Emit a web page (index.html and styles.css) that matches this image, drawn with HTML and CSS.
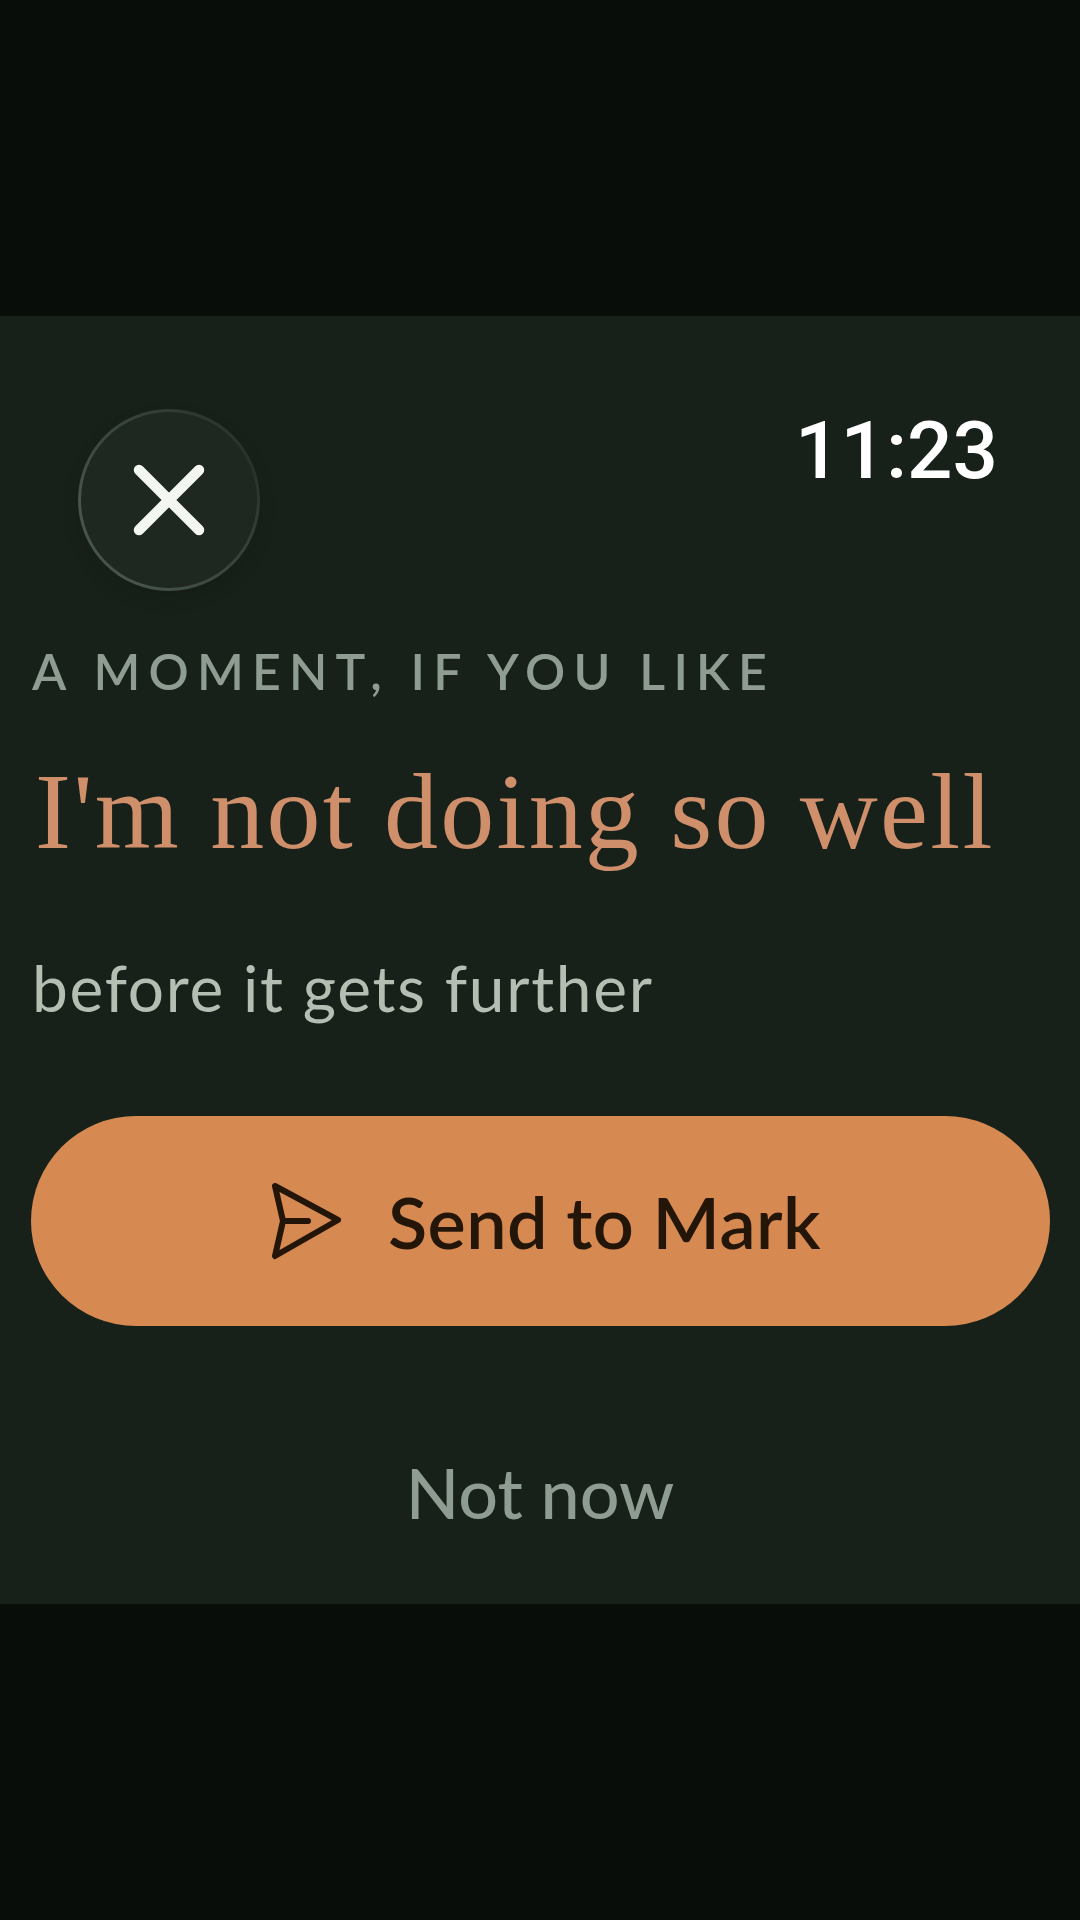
FILE: index.html
```html
<!DOCTYPE html>
<html lang="en">
<head>
<meta charset="utf-8">
<title>A moment</title>
<link rel="stylesheet" href="styles.css">
</head>
<body>
<main class="panel">
  <header class="top">
    <button class="close" aria-label="Close">
      <svg class="close-icon" viewBox="0 0 72 72" aria-hidden="true"><path d="M6 6 66 66M66 6 6 66"/></svg>
    </button>
    <time class="clock">11:23</time>
  </header>
  <p class="eyebrow">A MOMENT, IF YOU LIKE</p>
  <h1 class="title">I'm not doing so well</h1>
  <p class="sub">before it gets further</p>
  <button class="send">
    <svg class="send-icon" viewBox="0 0 72 80" aria-hidden="true"><path d="M5 5 68 39 5 75 13 40ZM13 40H38"/></svg>
    <span>Send to Mark</span>
  </button>
  <button class="later">Not now</button>
</main>
</body>
</html>
```
FILE: styles.css
```css
* { box-sizing: border-box; }
html, body { margin: 0; height: 1920px; }
body { background: #090d09; padding-top: 316px; overflow: hidden; }
.panel {
  height: 1288px;
  background: #18201a;
  padding: 93px 30px 0;
  display: flex;
  flex-direction: column;
  font-family: Lato, "Noto Sans", sans-serif;
}
.top { display: flex; justify-content: space-between; align-items: flex-start; padding: 0 52px 0 48px; }
.close {
  width: 182px; height: 182px;
  border-radius: 50%;
  border: 3px solid transparent;
  background:
    linear-gradient(#1e2820, #1e2820) padding-box,
    conic-gradient(from 0deg, #303c33, #27322a 70deg, #37443a 130deg, #465449 200deg, #465449 270deg, #303c33) border-box;
  box-shadow: 0 8px 18px rgba(0,0,0,.1);
  padding: 0;
  display: flex; align-items: center; justify-content: center;
}
.close-icon { width: 72px; height: 72px; }
.close-icon path { fill: none; stroke: #f4f6f2; stroke-width: 10.5; stroke-linecap: round; }
.clock { font-family: Roboto, sans-serif; font-weight: 500; font-size: 80px; line-height: 1; color: #fff; margin-top: 2px; }
.eyebrow { margin: 50px 0 0 2px; font-size: 50px; line-height: 60px; letter-spacing: 8.2px; color: #8f9c91; font-weight: 600; }
.title { margin: 46px 0 0 5px; font-family: "Liberation Serif", serif; font-weight: 400; font-size: 108px; line-height: 130px; letter-spacing: 2.2px; color: #cf8f6b; white-space: nowrap; }
.sub { margin: 73px 0 0 2px; font-size: 64px; line-height: 76px; letter-spacing: 1.7px; color: #b5beb3; }
.send {
  margin: 90px 0 0 1px;
  width: 1019px; height: 210px;
  border: 0; border-radius: 105px;
  background: #d68a52;
  color: #241509;
  display: flex; align-items: center; justify-content: center; gap: 46px;
  padding: 0 0 0 10px;
  font: 600 72px Lato, "Noto Sans", sans-serif;
  letter-spacing: .4px;
}
.send-icon { width: 72px; height: 80px; flex: none; }
.send-icon path { fill: none; stroke: #241509; stroke-width: 6; stroke-linecap: round; stroke-linejoin: round; }
.later {
  margin: 124px 0 0;
  align-self: center;
  background: none; border: 0; padding: 0;
  font: 500 70px Lato, "Noto Sans", sans-serif;
  color: #8f9c91;
}
```
